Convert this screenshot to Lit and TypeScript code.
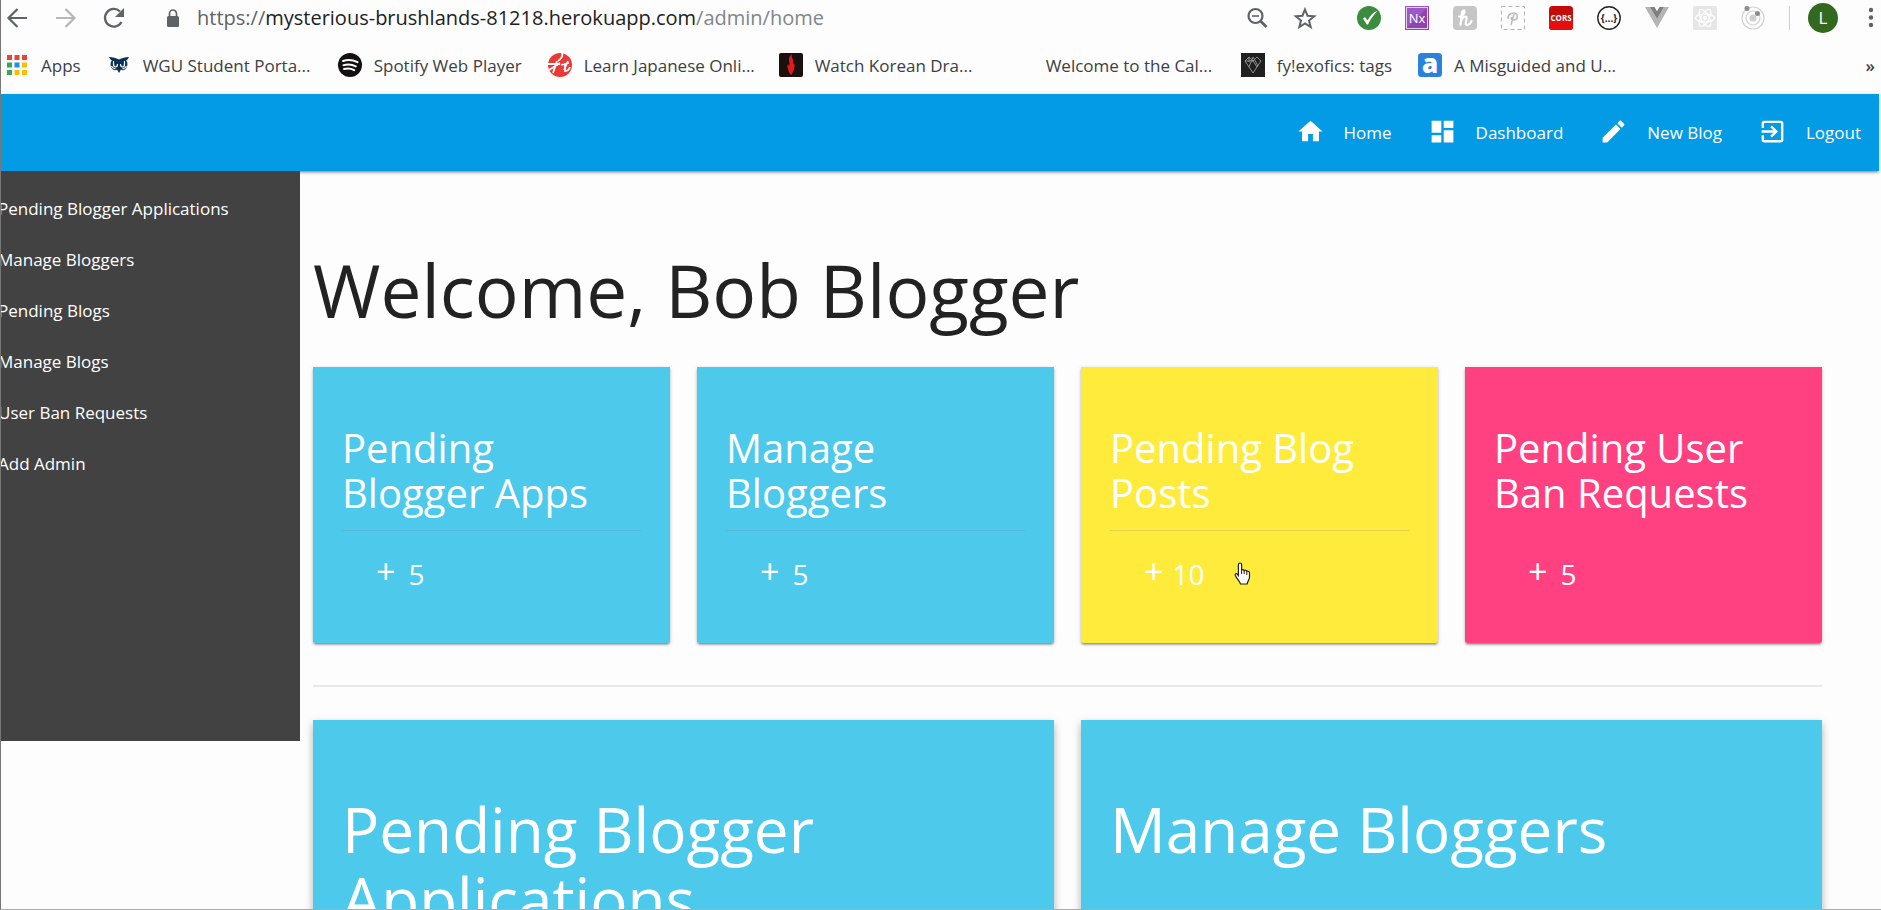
import { LitElement, html, css, svg } from "lit";
import { customElement } from "lit/decorators.js";

const extensions = [
  { name: "Checker", art: svg`<circle cx="12" cy="12" r="12" fill="#3c8c40"/><path d="M6 12.5 L8 11 L10.5 14.5 C13 10 16 6.5 20.5 4.8 C17 8.500 13.500 13 11 18.500 H9.800 Z" fill="#fff"/>` },
  { name: "Nx", art: svg`<rect width="24" height="24" fill="#8e44ad"/><path d="M0 0H24L0 24Z" fill="#9b59c6"/><rect x="1.500" y="1.500" width="21" height="21" fill="none" stroke="#e3cdf0"/><text x="12" y="17" text-anchor="middle" font-size="13" fill="#fff">Nx</text>` },
  { name: "Honey", art: svg`<rect width="24" height="24" rx="4" fill="#c6c6c6"/><path d="M6 10.500c3 0 6-3 5.500-5.500-.6-1.500-2.500 0-2.800 3L7.500 19M8 15c1-3 4-5.500 5.500-4 1 1.500-1.500 5-.5 7.500 1.500 1.500 4.500-.5 5.500-3.500" fill="none" stroke="#fff" stroke-width="2.200" stroke-linecap="round"/>` },
  { name: "Pin", art: svg`<rect x=".5" y=".5" width="23" height="23" fill="none" stroke="#b5b5b5" stroke-dasharray="4 3"/><path d="M10 19l3-11M7.500 13c-1.500-3 1.500-6 5-6 5 0 5 7 0 7-2 0-2.500-1-2-3" fill="none" stroke="#bcbcbc" stroke-width="1.600"/>` },
  { name: "CORS", art: svg`<rect width="24" height="24" rx="3.500" fill="#c30d0d"/><path d="M0 15h24v6a3 3 0 0 1-3 3H3a3 3 0 0 1-3-3z" fill="#e60d0d"/><text x="12" y="15" text-anchor="middle" font-size="8" font-weight="700" fill="#fff">CORS</text>` },
  { name: "JSON", art: svg`<circle cx="12" cy="12" r="11.200" fill="none" stroke="#222" stroke-width="1.400"/><text x="12" y="15.500" text-anchor="middle" font-size="10" font-weight="700" fill="#222">{...}</text>` },
  { name: "Vue", art: svg`<path d="M0 1h5l7 12 7-12h5L12 22z" fill="#b4b4b4"/><path d="M5 1h4.500L12 5.300 14.500 1H19l-7 12z" fill="#808080"/>` },
  { name: "React", art: svg`<rect width="24" height="24" rx="2" fill="#e6e6e6"/><g fill="none" stroke="#fff" stroke-width="1.200"><ellipse cx="12" cy="12" rx="9.500" ry="4"/><ellipse cx="12" cy="12" rx="9.500" ry="4" transform="rotate(60 12 12)"/><ellipse cx="12" cy="12" rx="9.500" ry="4" transform="rotate(120 12 12)"/></g><circle cx="12" cy="12" r="2" fill="#fff"/>` },
  { name: "Orbit", art: svg`<g fill="none" stroke="#d2d2d2" stroke-width="1.200"><circle cx="12" cy="12" r="11"/><circle cx="12" cy="12" r="7"/></g><circle cx="12" cy="12" r="3.500" fill="#cfcfcf"/><circle cx="6" cy="2.500" r="2.500" fill="#8c8c8c"/><circle cx="16.500" cy="7.500" r="2.500" fill="#8c8c8c"/>` },
];

const bookmarks = [
  { label: "WGU Student Porta...", clipped: true, art: svg`<path d="M2 4c4 0 7 1 10 2.500C15 5 18 4 22 4c-1 2-1.500 3-3 3.500 2 2 2 6-.5 8.500-1.500 1.500-3.500 1.500-4.500.5L12 20l-2-3.500c-1 1-3 1-4.500-.5C3 13.500 3 9.500 5 7.500 3.500 7 3 6 2 4z" fill="#0c3156"/><path d="M6.500 8v3c0 4 4 4 4 0M13.500 11c0 4 4 4 4 0V8M4.500 13c1 2 2.500 3 4 2.500M19.500 13c-1 2-2.500 3-4 2.500" fill="none" stroke="#fff" stroke-width="1.200"/>` },
  { label: "Spotify Web Player", clipped: false, art: svg`<circle cx="12" cy="12" r="12" fill="#140f10"/><path d="M5 8c5-1.500 10-1 14.500 1.200M5.500 12.200c4.500-1.200 8.500-.8 12.300 1.200M6 16c4-1 7-.6 10.200 1.100" fill="none" stroke="#fff" stroke-width="2" stroke-linecap="round"/>` },
  { label: "Learn Japanese Onli...", clipped: true, art: svg`<circle cx="12" cy="12" r="12" fill="#e93a36"/><path d="M0 11h12M9 8L5 20M1 17l11-7M14 0c1 3-1 6-4 8M20 8l-4 9M13 12l8-2M17 10v8c2 0 4-1 5-4" fill="none" stroke="#fff" stroke-width="1.800"/>` },
  { label: "Watch Korean Dra...", clipped: true, art: svg`<rect width="24" height="24" rx="2" fill="#19100f"/><path d="M13 1c-1.500 3 1.500 4.500 1 7.500 0 2 0 3 1.500 2 .5 4-1 7.500-3 11.500-1.500-1-2.500-2-3-4.500s-2-3.500-.5-6.500l1 2c1.500-2-.5-4.500 0-7.500C10.700 3.500 11.500 1.700 13 1z" fill="#e3191b"/>` },
  { label: "Welcome to the Cal...", clipped: true, art: svg`` },
  { label: "fy!exofics: tags", clipped: false, art: svg`<rect width="24" height="24" fill="#202020"/><path d="M4 8l4-4 4 4 4-4 4 4-8 12zM4 8h8l4 6M12 4L8 14M12 4l5 9M8 4v5" fill="none" stroke="#aaa" stroke-width=".8"/>` },
  { label: "A Misguided and U...", clipped: true, art: svg`<rect width="24" height="24" rx="3.500" fill="#2b82dc"/><text x="12" y="19.500" text-anchor="middle" font-size="26" font-weight="800" fill="#fff">a</text>` },
];

const navLinks = [
  { label: "Home", path: "M10 20v-6h4v6h5v-8h3L12 3 2 12h3v8z" },
  { label: "Dashboard", path: "M3 13h8V3H3v10zm0 8h8v-6H3v6zm10 0h8V11h-8v10zm0-18v6h8V3h-8z" },
  { label: "New Blog", path: "M3 17.250V21h3.750L17.810 9.940l-3.750-3.750L3 17.250zM20.710 7.040c.39-.39.39-1.020 0-1.410l-2.340-2.340c-.39-.39-1.020-.39-1.410 0l-1.830 1.830 3.750 3.750 1.830-1.830z" },
  { label: "Logout", path: "M10.090 15.590L11.500 17l5-5-5-5-1.410 1.410L12.670 11H3v2h9.670l-2.580 2.590zM19 3H5c-1.110 0-2 .9-2 2v4h2V5h14v14H5v-4H3v4c0 1.100.89 2 2 2h14c1.100 0 2-.9 2-2V5c0-1.100-.9-2-2-2z" },
];

const sideLinks = ["Pending Blogger Applications", "Manage Bloggers", "Pending Blogs", "Manage Blogs", "User Ban Requests", "Add Admin"];

const stats = [
  { title: "Pending Blogger Apps", count: 5, tone: "sky" },
  { title: "Manage Bloggers", count: 5, tone: "sky" },
  { title: "Pending Blog Posts", count: 10, tone: "yellow" },
  { title: "Pending User Ban Requests", count: 5, tone: "pink" },
];

@customElement("browser-bar")
class BrowserBar extends LitElement {
  static styles = css`
    :host { display: block; color: #3c4043; }
    button, a { border: 0; padding: 0; background: none; font: inherit; color: inherit; text-decoration: none; }
    button { display: block; flex: none; }
    svg { display: block; font-family: "Open Sans", sans-serif; }
    .tools { display: flex; align-items: center; height: 36px; padding-left: 3px; color: #5f6368; }
    .nav { display: flex; gap: 20px; }
    .address { display: flex; flex: 1; align-items: center; margin-left: 36px; gap: 15px; }
    .url { font-size: 20px; line-height: 28px; white-space: nowrap; }
    .host { color: #202124; }
    .path { color: #80868b; }
    .page-actions { display: flex; gap: 20px; margin-right: 38px; }
    .extensions { display: flex; gap: 24px; }
    .rule { width: 1px; height: 24px; margin: 0 18px 0 24px; background: #d0d0d0; }
    .avatar { width: 30px; height: 30px; border-radius: 50%; background: #33691e; color: #fff; font-size: 17px; line-height: 30px; }
    .menu { margin-left: 19px; }
    .bookmarks { display: flex; align-items: center; height: 58px; padding: 0 6px; font-size: 17px; }
    .bookmark { display: flex; align-items: center; gap: 12px; margin-right: 26px; white-space: nowrap; }
    .clipped { width: 169px; }
    .more { margin-left: auto; font-weight: 600; }
  `;

  render() {
    return html`
      <div class="tools">
        <div class="nav">
          <button aria-label="Back"><svg width="28" height="28" viewBox="0 0 28 28" fill="none" stroke="#5f6368" stroke-width="2.200"><path d="M23 14H5M13.500 5L4.500 14l9 9"/></svg></button>
          <button aria-label="Forward"><svg width="28" height="28" viewBox="0 0 28 28" fill="none" stroke="#b4b6b8" stroke-width="2.200"><path d="M4 14h18M13.500 5l9 9-9 9"/></svg></button>
          <button aria-label="Reload"><svg width="28" height="28" viewBox="0 0 28 28"><path d="M21.500 18A8.800 8.800 0 1 1 20 7.500" fill="none" stroke="#5f6368" stroke-width="2.300"/><path d="M24 4v9h-9z" fill="#5f6368"/></svg></button>
        </div>
        <div class="address">
          <svg width="18" height="20" viewBox="0 0 18 20"><rect x="3" y="8" width="12" height="11" rx="1.500" fill="#5f6368"/><path d="M5.500 9V5.500a3.500 3.500 0 0 1 7 0V9" fill="none" stroke="#5f6368" stroke-width="1.700"/></svg>
          <div class="url" role="textbox" aria-label="Address"><span>https://</span><span class="host">mysterious-brushlands-81218.herokuapp.com</span><span class="path">/admin/home</span></div>
        </div>
        <div class="page-actions">
          <button aria-label="Zoom"><svg width="28" height="28" viewBox="0 0 28 28" fill="none" stroke="#5f6368" stroke-width="2.200"><circle cx="12.500" cy="12" r="7"/><path d="M17.500 17l6 6" stroke-width="2.800"/><path d="M9 12h7" stroke-width="1.600"/></svg></button>
          <button aria-label="Bookmark this page"><svg width="28" height="28" viewBox="0 0 28 28"><path d="M14 5.500l2.500 6.200 6.700.5-5.200 4.300 1.700 6.500-5.700-3.600-5.700 3.600 1.700-6.500-5.200-4.300 6.700-.5z" fill="none" stroke="#5f6368" stroke-width="2"/></svg></button>
        </div>
        <div class="extensions">
          ${extensions.map((e) => html`<button aria-label=${e.name}><svg width="24" height="24" viewBox="0 0 24 24">${e.art}</svg></button>`)}
        </div>
        <span class="rule"></span>
        <button class="avatar">L</button>
        <button class="menu" aria-label="Menu"><svg width="24" height="24" viewBox="0 0 24 24" fill="#5f6368"><circle cx="14" cy="4" r="2.200"/><circle cx="14" cy="11.500" r="2.200"/><circle cx="14" cy="19" r="2.200"/></svg></button>
      </div>
      <div class="bookmarks">
        <a class="bookmark" href="#apps"><svg width="22" height="22" viewBox="0 0 22 22">
          ${["#ea4335", "#ea4335", "#ea4335", "#34a853", "#1a90f0", "#fbbc04", "#34a853", "#fbbc04", "#fbbc04"].map((c, i) => svg`<rect x=${(i % 3) * 7.5} y=${Math.floor(i / 3) * 7.5 + 1} width="5" height="5" fill=${c}/>`)}
        </svg><span>Apps</span></a>
        ${bookmarks.map((b) => html`<a class="bookmark" href="#bookmark"><svg width="24" height="24" viewBox="0 0 24 24">${b.art}</svg><span class=${b.clipped ? "clipped" : ""}>${b.label}</span></a>`)}
        <button class="more">»</button>
      </div>
    `;
  }
}

@customElement("app-root")
class AppRoot extends LitElement {
  static styles = css`
    :host { display: block; box-sizing: border-box; height: 100vh; overflow: hidden; position: relative; border-left: 1px solid #777; border-bottom: 1px solid #aaa; background: #fdfdfd; font-family: "Open Sans", sans-serif; }
    a { color: inherit; text-decoration: none; }
    h1, h2, h3, ul { margin: 0; padding: 0; font-weight: 400; list-style: none; }
    .topnav { display: flex; justify-content: flex-end; height: 77px; margin-right: 2px; background: #039be5; color: #fff; font-size: 17px; box-shadow: 0 2px 2px rgba(0,0,0,.2), 0 3px 1px -2px rgba(0,0,0,.12), 0 1px 5px rgba(0,0,0,.16); }
    .topnav a { display: flex; align-items: center; gap: 19px; padding: 0 18px; }
    .topnav svg { margin-bottom: 2px; }
    .layout { display: flex; align-items: flex-start; }
    .sidebar { position: relative; flex: none; box-sizing: border-box; width: 299px; min-height: 570px; padding-top: 12px; overflow: hidden; background: #424242; color: #fff; font-size: 17px; line-height: 51px; }
    .sidebar ul { margin-left: -3px; }
    .content { flex: 1; padding: 77px 59px 0 13px; }
    h1 { font-size: 73px; line-height: 83px; margin-bottom: 36px; color: #222; }
    .row { display: grid; gap: 27px; }
    .stats { grid-template-columns: repeat(4, 1fr); }
    .panels { grid-template-columns: repeat(2, 1fr); }
    .card { box-sizing: border-box; color: #fff; }
    .stat { height: 276px; padding: 58px 29px 0; border-radius: 0 0 3px 3px; box-shadow: 0 2px 2px rgba(0,0,0,.24), 0 3px 1px -2px rgba(0,0,0,.14), 0 1px 4px rgba(0,0,0,.16); }
    .sky { background: #4dc9ec; }
    .yellow { background: #ffeb3b; }
    .pink { background: #ff4081; }
    h2 { font-size: 40px; line-height: 45px; padding-bottom: 15px; border-bottom: 1px solid rgba(130,130,160,.25); }
    .pink h2 { border-color: transparent; }
    .count { display: flex; padding: 21px 0 0 34px; font-size: 28px; line-height: 44px; gap: 13px; }
    .count.wide { gap: 9px; }
    .plus { font-size: 34px; line-height: 38px; }
    .divider { height: 2px; margin: 42px 0 33px; border: 0; background: #e8e8e8; }
    .panel { height: 400px; padding: 74px 29px 0; box-shadow: 0 6px 8px rgba(0,0,0,.16), 0 2px 8px rgba(0,0,0,.16); }
    h3 { font-size: 62px; line-height: 70px; }
    .pointer { position: absolute; left: 1233px; top: 562px; }
  `;

  render() {
    return html`
      <browser-bar></browser-bar>
      <nav class="topnav">
        ${navLinks.map((n) => html`<a href="#nav"><svg width="29" height="29" viewBox="0 0 24 24" fill="#fff"><path d=${n.path}/></svg><span>${n.label}</span></a>`)}
      </nav>
      <div class="layout">
        <aside class="sidebar"><ul>${sideLinks.map((s) => html`<li><a href="#side">${s}</a></li>`)}</ul></aside>
        <main class="content">
          <h1>Welcome, Bob Blogger</h1>
          <section class="row stats">
            ${stats.map((s) => html`<article class="card stat ${s.tone}"><h2>${s.title}</h2><div class="count ${s.count > 9 ? "wide" : ""}"><span class="plus">+</span><span>${s.count}</span></div></article>`)}
          </section>
          <hr class="divider">
          <section class="row panels">
            <article class="card panel sky"><h3>Pending Blogger Applications</h3></article>
            <article class="card panel sky"><h3>Manage Bloggers</h3></article>
          </section>
        </main>
      </div>
      <svg class="pointer" width="18" height="23" viewBox="0 0 18 23"><path d="M6 1c1 0 1.600.7 1.600 1.600V8c.8-.8 2.400-.5 2.600.6 1-.7 2.300-.3 2.600.8 1.200-.6 2.700.2 2.700 1.600v4c0 3-2 4-2.300 7H6.500C6 19 2.500 16.500 1.300 13.500.7 12 2.500 11 3.500 12.300L4.400 13.500V2.600C4.400 1.700 5 1 6 1z" fill="#fff" stroke="#222" stroke-width="1.200"/><path d="M7.600 8v4M10.200 9v3M12.800 10v3" stroke="#222"/></svg>
    `;
  }
}
